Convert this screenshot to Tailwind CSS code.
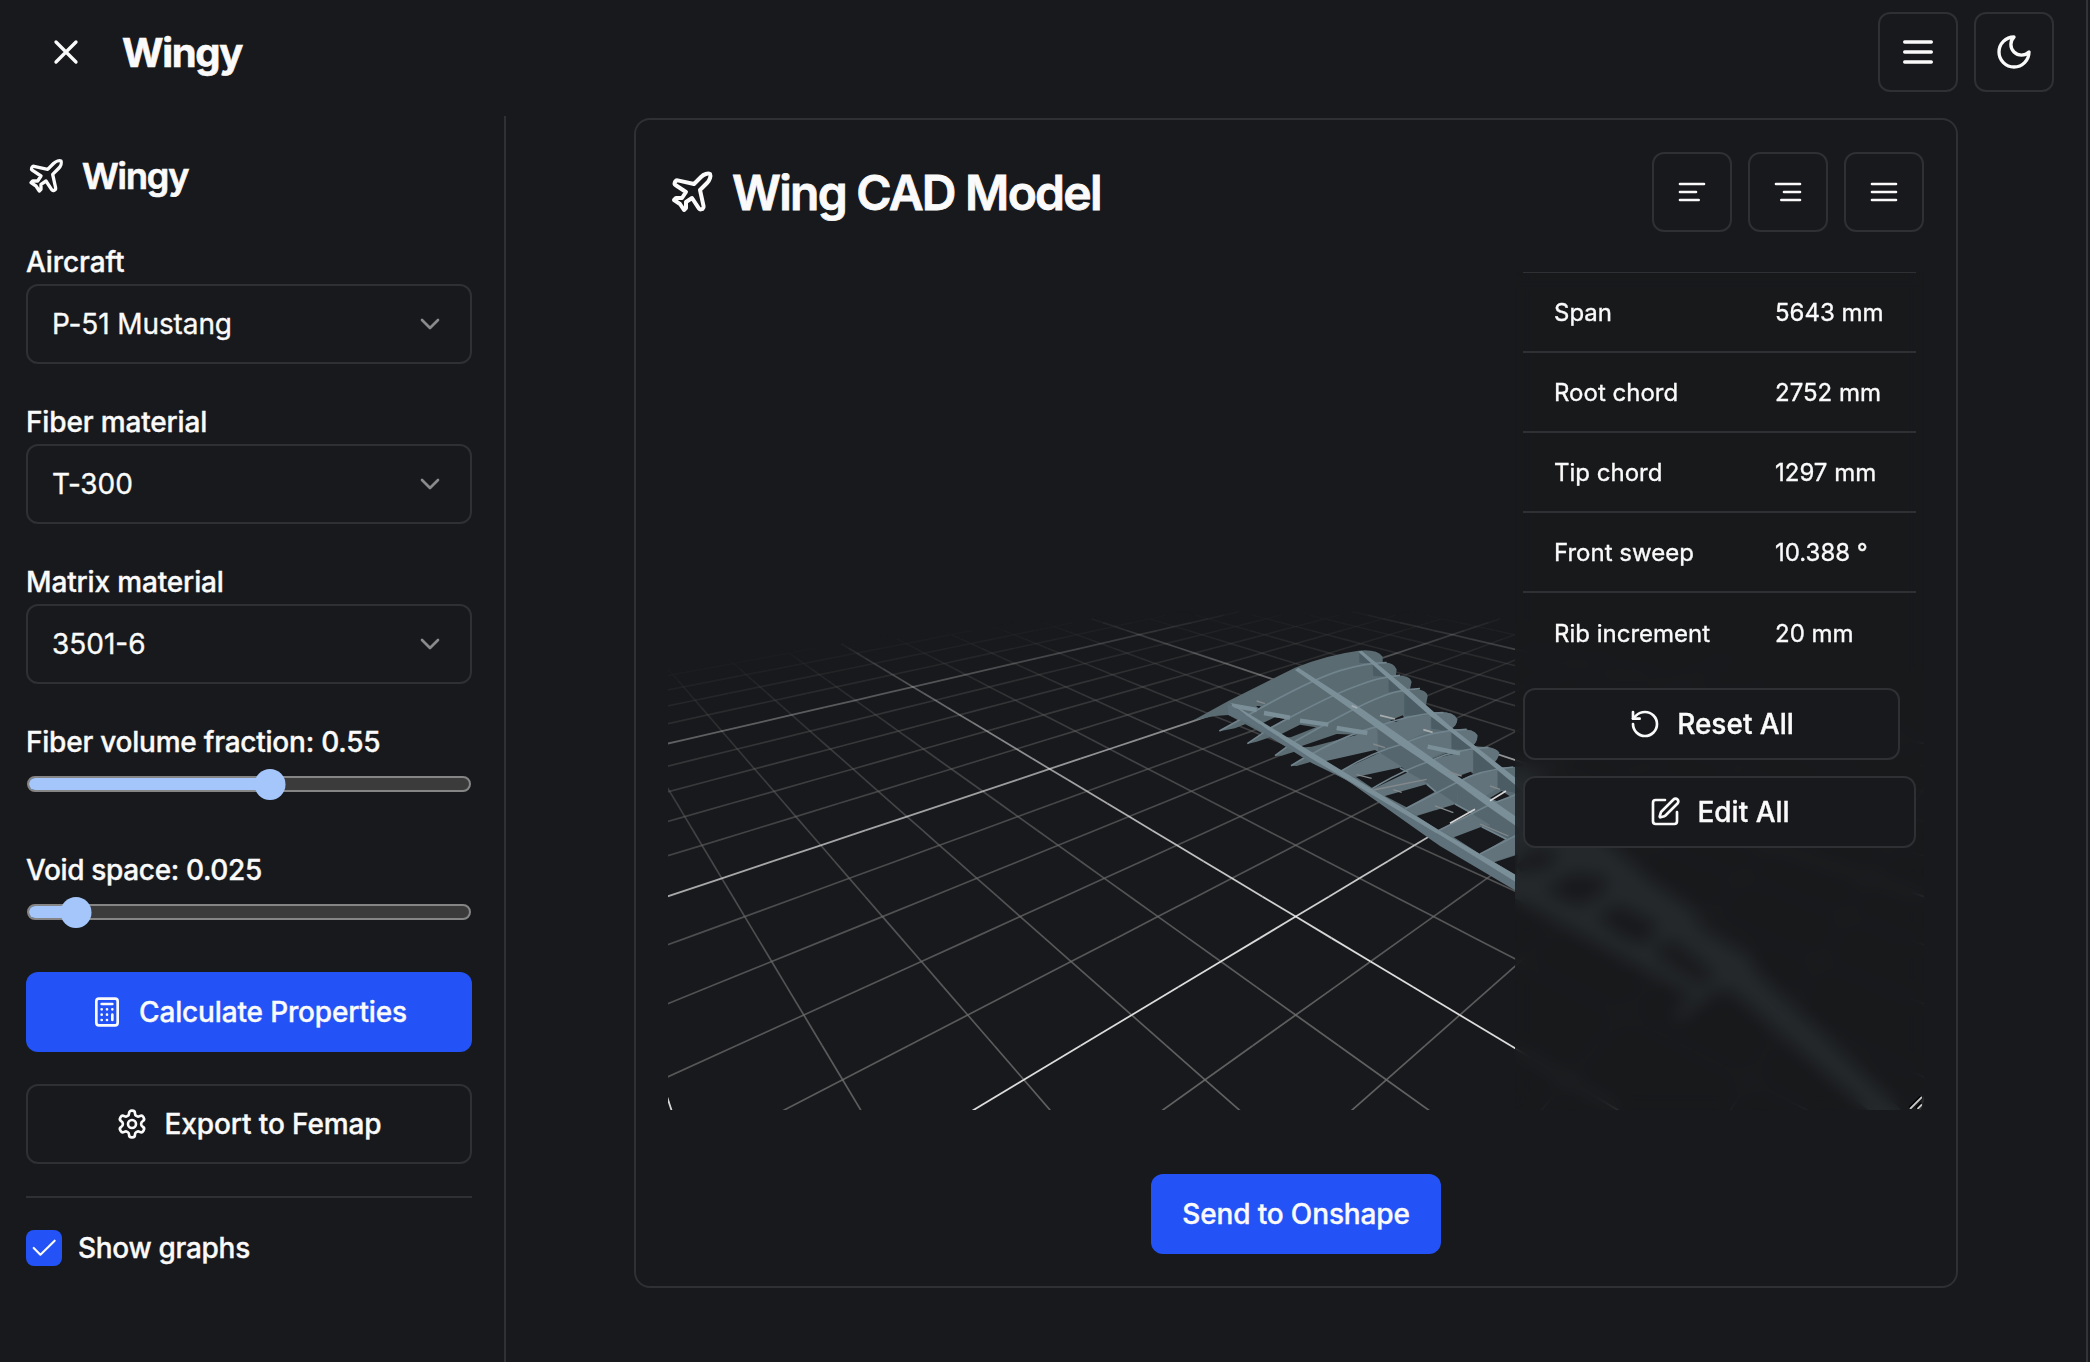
<!DOCTYPE html>
<html lang="en">
<head>
<meta charset="utf-8">
<title>Wingy</title>
<script src="https://cdn.jsdelivr.net/npm/@tailwindcss/browser@4"></script>
</head>
<body class="h-screen w-screen overflow-hidden bg-[#18191c] font-['Inter',sans-serif] text-[28px] text-[#fafafa] [-webkit-text-stroke:0.35px_#fafafa]">
<svg class="hidden">
  <symbol id="plane" viewBox="0 0 24 24"><path d="M17.8 19.2 16 11l3.5-3.5C21 6 21.5 4 21 3c-1-.5-3 0-4.5 1.5L13 8 4.8 6.2c-.5-.1-.9.1-1.1.5l-.3.5c-.2.5-.1 1 .3 1.3L9 12l-2 3H4l-1 1 3 2 2 3 1-1v-3l3-2 3.5 5.3c.3.4.8.5 1.3.3l.5-.2c.4-.3.6-.7.5-1.2z"/></symbol>
  <symbol id="chevron" viewBox="0 0 24 24"><path d="m6 9 6 6 6-6"/></symbol>
</svg>
<div class="flex h-full w-[2088px] flex-col border-r-2 border-[#333439]">
  <header class="flex h-[116px] shrink-0 items-start justify-between pt-3 pr-8 pl-[46px]">
    <div class="flex h-20 items-center gap-9">
      <svg class="size-10" viewBox="0 0 24 24" fill="none" stroke="currentColor" stroke-width="2" stroke-linecap="round" stroke-linejoin="round"><path d="M18 6 6 18M6 6l12 12"/></svg>
      <h1 class="pt-0.5 text-[40px] leading-none font-bold tracking-[-1.3px] [-webkit-text-stroke:0.6px_#fafafa]">Wingy</h1>
    </div>
    <div class="flex gap-4">
      <button class="flex size-20 items-center justify-center rounded-xl border-2 border-[#2e3034]"><svg class="size-10" viewBox="0 0 24 24" fill="none" stroke="currentColor" stroke-width="2" stroke-linecap="round"><path d="M4 12h16M4 6h16M4 18h16"/></svg></button>
      <button class="flex size-20 items-center justify-center rounded-xl border-2 border-[#2e3034]"><svg class="size-10" viewBox="0 0 24 24" fill="none" stroke="currentColor" stroke-width="2" stroke-linecap="round" stroke-linejoin="round"><path d="M12 3a6 6 0 0 0 9 9 9 9 0 1 1-9-9Z"/></svg></button>
    </div>
  </header>
  <div class="flex min-h-0 flex-1">
    <aside class="flex w-[506px] shrink-0 flex-col border-r-2 border-[#2e3034] pt-10 pr-8 pl-[26px]">
      <div class="mb-[46px] flex h-10 shrink-0 items-center gap-4">
        <svg class="size-10" fill="none" stroke="currentColor" stroke-width="2" stroke-linecap="round" stroke-linejoin="round"><use href="#plane"/></svg>
        <h2 class="text-[36px] leading-none font-semibold tracking-[-1.1px] [-webkit-text-stroke:0.7px_#fafafa]">Wingy</h2>
      </div>
      <div class="flex flex-col gap-[38px]">
        <div>
          <div class="flex h-[42px] items-center pb-0.5 font-medium tracking-[-0.1px]">Aircraft</div>
          <div class="flex h-20 items-center justify-between rounded-xl border-2 border-[#2e3034] px-6"><span class="tracking-[-0.1px]">P-51 Mustang</span><svg class="size-8 opacity-50" fill="none" stroke="currentColor" stroke-width="2" stroke-linecap="round" stroke-linejoin="round"><use href="#chevron"/></svg></div>
        </div>
        <div>
          <div class="flex h-[42px] items-center pb-0.5 font-medium tracking-[-0.15px]">Fiber material</div>
          <div class="flex h-20 items-center justify-between rounded-xl border-2 border-[#2e3034] px-6"><span class="tracking-[-0.1px]">T-300</span><svg class="size-8 opacity-50" fill="none" stroke="currentColor" stroke-width="2" stroke-linecap="round" stroke-linejoin="round"><use href="#chevron"/></svg></div>
        </div>
        <div>
          <div class="flex h-[42px] items-center pb-0.5 font-medium tracking-[-0.15px]">Matrix material</div>
          <div class="flex h-20 items-center justify-between rounded-xl border-2 border-[#2e3034] px-6"><span>3501-6</span><svg class="size-8 opacity-50" fill="none" stroke="currentColor" stroke-width="2" stroke-linecap="round" stroke-linejoin="round"><use href="#chevron"/></svg></div>
        </div>
      </div>
      <div class="mt-[38px] flex flex-col gap-[46px]">
        <div>
          <div class="flex h-[42px] items-center pb-0.5 font-medium tracking-[-0.23px]">Fiber volume fraction: 0.55</div>
          <div class="relative flex h-10 items-center px-px">
            <div class="h-4 w-full overflow-hidden rounded-lg border-2 border-[#858585] bg-[#3b3b3b]"><div class="h-full bg-[#a4c6fa]" style="width:55%"></div></div>
            <div class="absolute size-[31px] -translate-x-1/2 rounded-full bg-[#a4c6fa]" style="left:244px"></div>
          </div>
        </div>
        <div>
          <div class="flex h-[42px] items-center pb-0.5 font-medium tracking-[-0.35px]">Void space: 0.025</div>
          <div class="relative flex h-10 items-center px-px">
            <div class="h-4 w-full overflow-hidden rounded-lg border-2 border-[#858585] bg-[#3b3b3b]"><div class="h-full bg-[#a4c6fa]" style="width:11%"></div></div>
            <div class="absolute size-[31px] -translate-x-1/2 rounded-full bg-[#a4c6fa]" style="left:50px"></div>
          </div>
        </div>
      </div>
      <button class="mt-10 flex h-20 shrink-0 items-center justify-center gap-4 rounded-xl bg-[#2353f6] font-medium tracking-[-0.15px]">
        <svg class="size-8" viewBox="0 0 24 24" fill="none" stroke="currentColor" stroke-width="2" stroke-linecap="round" stroke-linejoin="round"><rect width="16" height="20" x="4" y="2" rx="2"/><path d="M8 6h8M16 14v4M16 10h.01M12 10h.01M8 10h.01M12 14h.01M8 14h.01M12 18h.01M8 18h.01"/></svg>Calculate Properties
      </button>
      <button class="mt-8 flex h-20 shrink-0 items-center justify-center gap-4 rounded-xl border-2 border-[#2e3034] font-medium tracking-[-0.1px]">
        <svg class="size-8" viewBox="0 0 24 24" fill="none" stroke="currentColor" stroke-width="2" stroke-linecap="round" stroke-linejoin="round"><path d="M12.22 2h-.44a2 2 0 0 0-2 2v.18a2 2 0 0 1-1 1.73l-.43.25a2 2 0 0 1-2 0l-.15-.08a2 2 0 0 0-2.73.73l-.22.38a2 2 0 0 0 .73 2.73l.15.1a2 2 0 0 1 1 1.72v.51a2 2 0 0 1-1 1.74l-.15.09a2 2 0 0 0-.73 2.73l.22.38a2 2 0 0 0 2.73.73l.15-.08a2 2 0 0 1 2 0l.43.25a2 2 0 0 1 1 1.73V20a2 2 0 0 0 2 2h.44a2 2 0 0 0 2-2v-.18a2 2 0 0 1 1-1.73l.43-.25a2 2 0 0 1 2 0l.15.08a2 2 0 0 0 2.73-.73l.22-.39a2 2 0 0 0-.73-2.73l-.15-.08a2 2 0 0 1-1-1.74v-.5a2 2 0 0 1 1-1.74l.15-.09a2 2 0 0 0 .73-2.73l-.22-.38a2 2 0 0 0-2.73-.73l-.15.08a2 2 0 0 1-2 0l-.43-.25a2 2 0 0 1-1-1.73V4a2 2 0 0 0-2-2z"/><circle cx="12" cy="12" r="3"/></svg>Export to Femap
      </button>
      <div class="my-8 h-0.5 shrink-0 bg-[#2e3034]"></div>
      <div class="flex items-center gap-4 font-medium tracking-[-0.3px]">
        <span class="flex size-9 items-center justify-center rounded-lg bg-[#2353f6]"><svg class="size-8" viewBox="0 0 24 24" fill="none" stroke="currentColor" stroke-width="1.6" stroke-linecap="round" stroke-linejoin="round"><path d="M20 6.5 9.3 17 4.3 12"/></svg></span>
        <span class="leading-9">Show graphs</span>
      </div>
    </aside>
    <main class="min-w-0 flex-1 pt-0.5 pl-32">
      <section class="flex h-[1170px] w-[1324px] flex-col rounded-2xl border-2 border-[#2e3034] px-8 pt-8">
        <div class="flex h-20 shrink-0 items-center justify-between">
          <div class="flex items-center gap-4">
            <svg class="size-12" fill="none" stroke="currentColor" stroke-width="2" stroke-linecap="round" stroke-linejoin="round"><use href="#plane"/></svg>
            <h3 class="pt-0.5 text-[48px] leading-none font-semibold tracking-[-1.75px] [-webkit-text-stroke:0.8px_#fafafa]">Wing CAD Model</h3>
          </div>
          <div class="flex gap-4">
            <button class="flex size-20 items-center justify-center rounded-xl border-2 border-[#2e3034]"><svg class="size-8" viewBox="0 0 24 24" fill="none" stroke="currentColor" stroke-width="2" stroke-linecap="round"><path d="M21 6H3M15 12H3M17 18H3"/></svg></button>
            <button class="flex size-20 items-center justify-center rounded-xl border-2 border-[#2e3034]"><svg class="size-8" viewBox="0 0 24 24" fill="none" stroke="currentColor" stroke-width="2" stroke-linecap="round"><path d="M21 6H3M21 12H9M21 18H7"/></svg></button>
            <button class="flex size-20 items-center justify-center rounded-xl border-2 border-[#2e3034]"><svg class="size-8" viewBox="0 0 24 24" fill="none" stroke="currentColor" stroke-width="2" stroke-linecap="round"><path d="M3 6h18M3 12h18M3 18h18"/></svg></button>
          </div>
        </div>
        <div class="relative mt-10 flex h-[838px] w-[1256px] shrink-0 justify-end overflow-hidden">
          <canvas id="grid" width="1256" height="838" class="absolute inset-0"></canvas>
          <!-- wing: coordinates are thirds of a pixel, measured from (492, 328) in the viewport -->
          <svg class="absolute inset-0" width="1256" height="838" viewBox="0 0 1256 838" fill="none">
            <g transform="translate(492 328) scale(.33333)">
              <g fill="#5a6b72">
                <path d="M100 361L205 303Q310 250 405 203Q500 165 595 152Q650 146 668 170L668 188Q700 185 710 208L708 226Q750 226 755 245L750 267Q800 266 803 288L798 315L812 338Q880 330 892 358Q892 375 872 388Q940 382 952 405Q954 425 935 440Q1005 436 1018 458Q1015 478 990 492L1020 502L1090 500L1090 850L840 705L455 480L205 345L165 348Z"/>
                <path d="M178 394L265 345L300 355L225 385ZM262 432L325 388L350 405L290 425ZM345 468L395 430L420 450L365 467ZM393 497L455 460L480 478L410 498Z"/>
              </g>
              <g fill="#62737b">
                <path d="M455 462Q560 405 650 382L655 452L480 487ZM545 512Q640 455 728 435L728 500L580 532ZM635 567Q720 510 808 485L805 552L670 590ZM735 627L893 548L890 612L770 646ZM835 692L990 618L990 674L880 712ZM960 762L1090 692L1090 755L1000 786Z"/>
                <path d="M665 372Q740 345 812 338L812 392L745 420L720 415ZM735 430Q810 400 872 390L874 448L805 478ZM805 485Q870 455 938 442L940 512L885 532ZM890 545Q950 515 1013 505L1013 565L975 590ZM985 615L1090 575L1090 660Z"/>
                <path d="M812 338Q880 330 892 358Q892 375 872 388ZM872 388Q940 382 952 405Q954 425 935 440ZM938 442Q1005 436 1018 458Q1015 478 1000 490Z"/>
              </g>
              <g fill="#4b5c64">
                <path d="M598 158L638 190L598 188ZM638 192L684 230L640 228ZM686 235L733 270L686 276ZM733 275L800 325L812 345L733 347ZM814 350L875 395L814 386ZM875 397L940 448L930 452L875 446ZM940 450L1013 508L960 520L940 524ZM1013 512L1090 575L1070 580L1013 568Z"/>
              </g>
              <g fill="#55666e">
                <path d="M655 390L728 440L728 502L655 455ZM728 442L808 492L806 552L728 506ZM808 495L895 555L890 612L808 557ZM895 558L992 625L990 674L893 615ZM992 628L1090 695L1035 718L990 680Z"/>
              </g>
              <g fill="#18191c">
                <path d="M290 378L345 352L375 357L330 382ZM345 412L420 374L468 382L392 412ZM410 443L530 402L592 404L455 440ZM482 487L645 450L658 458L545 511ZM588 531L725 502L745 516L640 566ZM675 588L800 553L825 575L740 622ZM770 648L885 613L935 641L835 690ZM882 712L965 680L1035 718L960 762ZM1003 787L1090 758L1090 840Z"/>
                <path d="M690 362L728 346L732 352L708 366ZM808 480L858 460L880 462L830 474ZM890 530L932 515L940 522L905 538ZM990 594L1025 573L1052 590L1012 604ZM288 318L302 318L298 326Z"/>
              </g>
              <g stroke="#71848d" stroke-width="5">
                <path d="M265 345Q450 240 540 212Q620 188 680 188M325 388Q500 290 590 258Q660 230 720 226M395 430Q560 335 640 300Q710 268 780 266M455 462Q570 400 650 380Q760 340 850 338M545 512Q640 455 728 432Q820 390 920 388M635 567Q720 515 808 484Q880 448 985 442M735 627L893 546Q960 510 1060 501M835 692L985 616L1090 575M960 762L1090 695"/>
                <path d="M178 393L265 345M262 431L325 388M345 467L395 430M393 497L455 460M720 504L745 517M800 552L828 576M885 612L940 642M965 680L1040 718" />
              </g>
              <g stroke="#7b8f99" stroke-width="13">
                <path d="M215 316L290 330M312 339L390 353M420 362L505 374M530 384L622 399M803 440L900 460"/>
              </g>
              <path d="M203 310L455 475L840 705L1090 858L1090 886L840 738L560 540L455 489L265 370L205 345Z" fill="#5f717a"/>
              <path d="M203 303L455 456L835 689L1090 838L1090 860L840 706L455 476L265 350Z" fill="#7b8f99"/>
              <path d="M415 203L590 316L740 420L900 533L1090 665L1090 693L985 620L890 550L720 435L580 333L405 210Z" fill="#7b8f99"/>
              <path d="M605 152L740 265L870 378L1090 552L1090 575L935 445L810 347L720 268L595 155Z" fill="#7b8f99"/>
              <g stroke="#d6d6d6" stroke-width="5"><path d="M990 602L1038 573M870 670L945 628"/></g>
              <g stroke="#a8adaf" stroke-width="5"><path d="M660 346L705 357M790 389L818 397M575 317L592 324"/></g>
              <g stroke="#84898c" stroke-width="4"><path d="M640 432L675 443M290 303L315 311M590 524L635 535M640 570L800 538M700 569L725 577M825 618L880 638M865 515L905 528M960 672L1045 708M990 558L1020 568"/></g>
              <g transform="translate(1020 690)" fill="#66787f">
                <path fill-rule="evenodd" d="M72 -200L200 -60L345 55L450 150L580 240L600 290L750 380L770 425L1215 850L1115 850L690 478L640 485L540 570L520 560L575 495L45 205ZM50 105L110 50L180 65L140 112L60 125ZM135 180L215 130L320 140L310 195L230 225ZM290 260L355 225L470 280L445 340L380 328ZM465 345L530 335L645 435L605 468L480 390Z"/>
              </g>
            </g>
          </svg>
          <div class="relative flex w-[409px] flex-col bg-[#18191c]/84 pl-2 backdrop-blur-[8px]">
            <div class="w-[393px] border-t border-[#2e3034] text-[24px]">
              <div class="flex h-20 items-center border-b-2 border-[#2e3034] pt-0.5 pl-[31px]"><span class="w-[221px]">Span</span><span>5643 mm</span></div>
              <div class="flex h-20 items-center border-b-2 border-[#2e3034] pt-0.5 pl-[31px]"><span class="w-[221px]">Root chord</span><span>2752 mm</span></div>
              <div class="flex h-20 items-center border-b-2 border-[#2e3034] pt-0.5 pl-[31px]"><span class="w-[221px]">Tip chord</span><span>1297 mm</span></div>
              <div class="flex h-20 items-center border-b-2 border-[#2e3034] pt-0.5 pl-[31px]"><span class="w-[221px]">Front sweep</span><span>10.388 °</span></div>
              <div class="flex h-20 items-center pt-0.5 pl-[31px]"><span class="w-[221px]">Rib increment</span><span>20 mm</span></div>
            </div>
            <button class="mt-[15px] flex h-[72px] w-[377px] items-center justify-center gap-4 rounded-xl border-2 border-[#2e3034] bg-[#18191c] font-medium">
              <svg class="size-8" viewBox="0 0 24 24" fill="none" stroke="currentColor" stroke-width="2" stroke-linecap="round" stroke-linejoin="round"><path d="M3 12a9 9 0 1 0 9-9 9.75 9.75 0 0 0-6.740 2.740L3 8"/><path d="M3 3v5h5"/></svg>Reset All
            </button>
            <button class="mt-4 flex h-[72px] w-[393px] items-center justify-center gap-4 rounded-xl border-2 border-[#2e3034] bg-[#18191c] font-medium">
              <svg class="size-8" viewBox="0 0 24 24" fill="none" stroke="currentColor" stroke-width="2" stroke-linecap="round" stroke-linejoin="round"><path d="M12 3H5a2 2 0 0 0-2 2v14a2 2 0 0 0 2 2h14a2 2 0 0 0 2-2v-7"/><path d="M18.375 2.625a1 1 0 0 1 3 3l-9.013 9.014a2 2 0 0 1-.853.505l-2.873.84a.5.5 0 0 1-.62-.62l.84-2.873a2 2 0 0 1 .506-.852z"/></svg>Edit All
            </button>
            <svg class="absolute right-0.5 bottom-px size-[13px]" viewBox="0 0 13 13" fill="none"><path d="M0 12L12 0M7 12L12 7" stroke="#000" stroke-width="2"/><path d="M1 13L13 1M8.500 13L13 8.500" stroke="#c8c8c8" stroke-width="1.800"/></svg>
          </div>
        </div>
        <button class="mt-16 h-20 w-[290px] shrink-0 self-center rounded-xl bg-[#2353f6] font-medium tracking-[-0.15px]">Send to Onshape</button>
      </section>
    </main>
  </div>
</div>
<script>
  // Ground grid in perspective: one line per unit, a brighter one every five, fading with distance from the camera.
  const ctx = document.getElementById('grid').getContext('2d');
  const project = (i, j) => {
    const d = 12.5 - i - j;
    return [627.7 + 860.85 * (i - j) / d, 127.8 + 6460 / d];
  };
  const fade = (i, j) => Math.max(0, 1 - Math.hypot(i - 5, j - 5) / 20);
  const segment = (a, b, c, d, major) => {
    if (12.5 - a - b < 1 || 12.5 - c - d < 1) return;
    const f = fade((a + c) / 2, (b + d) / 2);
    if (!f) return;
    const p = project(a, b), q = project(c, d);
    ctx.strokeStyle = major ? `rgba(255,255,255,${Math.min(0.85, f * 1.25)})` : `rgba(120,120,120,${Math.min(1, f * 1.0)})`;
    ctx.lineWidth = major ? 1.8 : 1.7;
    ctx.beginPath();
    ctx.moveTo(p[0], p[1]);
    ctx.lineTo(q[0], q[1]);
    ctx.stroke();
  };
  for (const major of [false, true])
    for (let n = -20; n <= 26; n++) {
      if ((n % 5 === 0) !== major) continue;
      for (let t = -20; t < 26; t += 0.5) {
        segment(n, t, n, t + 0.5, major);
        segment(t, n, t + 0.5, n, major);
      }
    }
</script>
</body>
</html>
